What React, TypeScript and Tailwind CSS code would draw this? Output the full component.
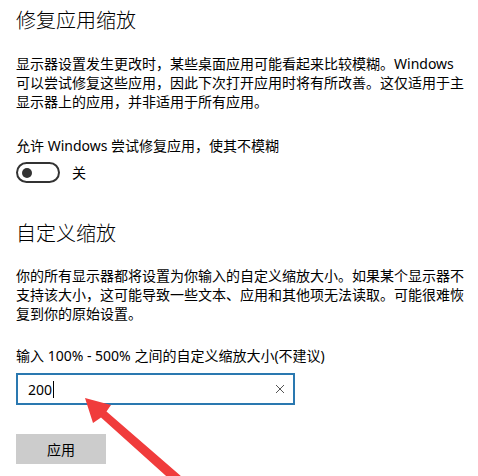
const font = { fontFamily: '"Noto Sans", "Noto Sans CJK SC", sans-serif' };

const Toggle = () => (
  <div className="flex items-center gap-3">
    <div className="flex h-[21px] w-[44px] items-center rounded-full border-2 border-[#333] pl-[4px]">
      <div className="h-[10px] w-[10px] rounded-full bg-[#333]" />
    </div>
    <span className="text-[14px] leading-[19px] text-black">关</span>
  </div>
);

const Arrow = () => (
  <svg className="pointer-events-none absolute left-0 top-0" width={478} height={476} viewBox="0 0 478 476">
    <polygon
      points="85,398 93,423 101,417.5 175,484 182,477 106.5,411.5 111,405"
      fill="#f03c3c"
    />
  </svg>
);

export default function App() {
  return (
    <div className="relative h-[476px] w-[478px] overflow-hidden bg-white pl-4 text-black" style={font}>
      <h1 className="pt-[7px] text-[20px] font-light leading-[28px]">修复应用缩放</h1>

      <p className="mt-[19px] whitespace-nowrap text-[14px] leading-[19px]">
        显示器设置发生更改时，某些桌面应用可能看起来比较模糊。Windows
        <br />
        可以尝试修复这些应用，因此下次打开应用时将有所改善。这仅适用于主
        <br />
        显示器上的应用，并非适用于所有应用。
      </p>

      <p className="mt-[25px] text-[14px] leading-[19px]">允许 Windows 尝试修复应用，使其不模糊</p>
      <div className="mt-[7px]">
        <Toggle />
      </div>

      <h2 className="mt-[37px] text-[20px] font-light leading-[28px]">自定义缩放</h2>

      <p className="mt-[18px] whitespace-nowrap text-[14px] leading-[19px]">
        你的所有显示器都将设置为你输入的自定义缩放大小。如果某个显示器不
        <br />
        支持该大小，这可能导致一些文本、应用和其他项无法读取。可能很难恢
        <br />
        复到你的原始设置。
      </p>

      <p className="mt-[23px] text-[14px] leading-[19px]">输入 100% - 500% 之间的自定义缩放大小(不建议)</p>

      <div className="mt-[8px] flex h-[32px] w-[279px] items-center justify-between border-2 border-[#2a78b0] pl-[10px] pr-[8px]">
        <div className="flex items-center text-[14px]">
          <span>200</span>
          <span className="ml-[1px] h-[17px] w-px bg-black" />
        </div>
        <svg width="10" height="10" viewBox="0 0 10 10">
          <path d="M1 1L9 9M9 1L1 9" stroke="#555" strokeWidth="1" />
        </svg>
      </div>

      <button className="mt-[29px] h-[30px] w-[90px] bg-[#cccccc] text-[14px] text-black">应用</button>

      <Arrow />
    </div>
  );
}
